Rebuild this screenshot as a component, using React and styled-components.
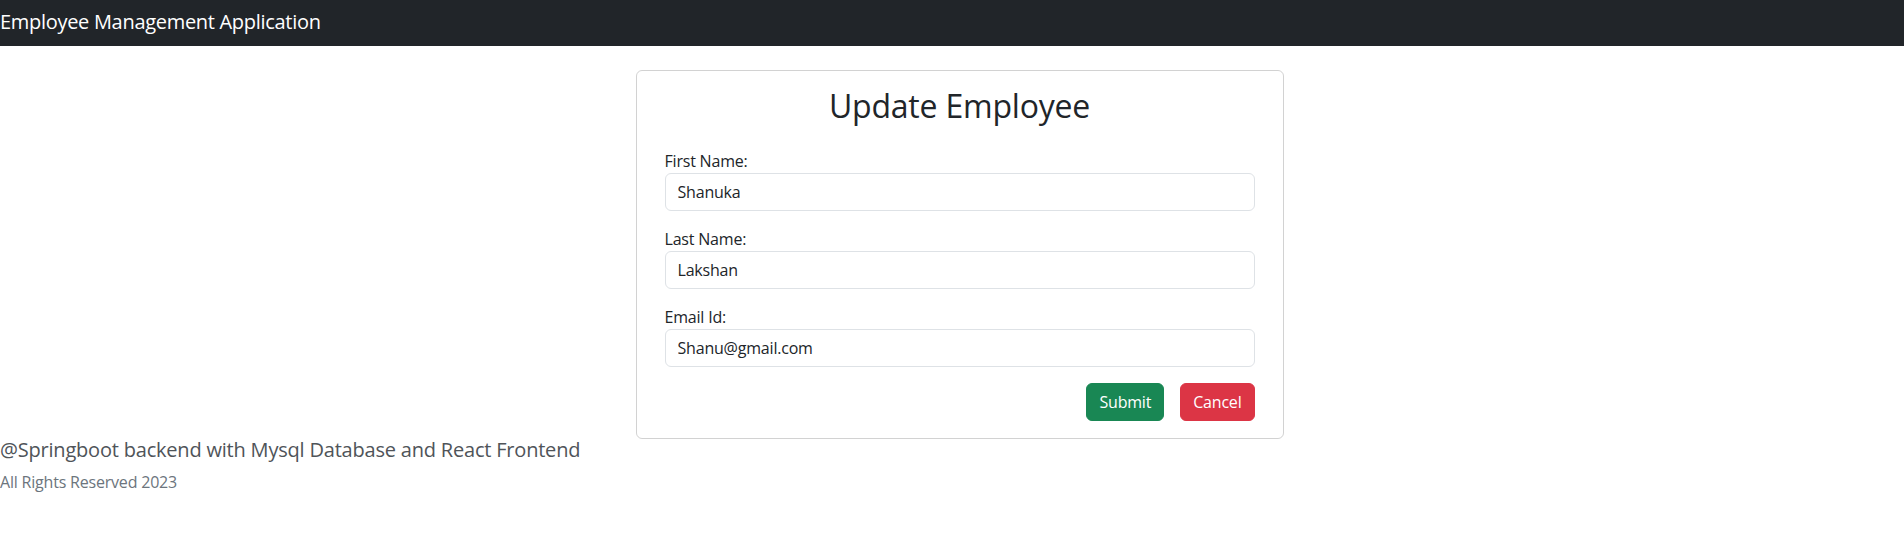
import React from 'react';
import styled, { createGlobalStyle } from 'styled-components';

const GlobalStyle = createGlobalStyle`
  body {
    margin: 0;
    font-family: "Open Sans", "Noto Sans", sans-serif;
    letter-spacing: -0.2px;
    color: #212529;
    background: #fff;
  }
`;

const Navbar = styled.nav`
  height: 46px;
  background: #212529;
  display: flex;
  align-items: center;
`;

const Brand = styled.span`
  font-size: 20px;
  color: #fff;
  line-height: 1.5;
  letter-spacing: -0.3px;
  padding-bottom: 2px;
`;

const Main = styled.main`
  display: flex;
  justify-content: center;
  padding: 24px 0 0 15px;
`;

const Card = styled.div`
  width: 648px;
  box-sizing: border-box;
  border: 1px solid rgba(0, 0, 0, 0.175);
  border-radius: 6px;
  padding: 16px 28px 17px;
`;

const Title = styled.h2`
  margin: 0 0 24px;
  font-size: 32px;
  font-weight: 400;
  line-height: 1.2;
  text-align: center;
`;

const Group = styled.div`
  margin-bottom: 16px;
`;

const Label = styled.label`
  display: block;
  font-size: 16px;
  line-height: 24px;
`;

const Input = styled.input`
  display: block;
  width: 100%;
  box-sizing: border-box;
  height: 38px;
  padding: 6px 12px;
  font-family: inherit;
  font-size: 16px;
  letter-spacing: inherit;
  color: #212529;
  border: 1px solid #dee2e6;
  border-radius: 6px;
  outline: none;
`;

const Actions = styled.div`
  display: flex;
  justify-content: flex-end;
  gap: 16px;
`;

const Button = styled.button`
  height: 38px;
  padding: 6px 12px;
  font-family: inherit;
  font-size: 16px;
  letter-spacing: inherit;
  color: #fff;
  border: 1px solid ${(p) => p.$bg};
  background: ${(p) => p.$bg};
  border-radius: 6px;
  cursor: pointer;
`;

const Footer = styled.footer`
  padding-top: 0;
`;

const FooterTitle = styled.p`
  margin: 0;
  font-size: 20px;
  line-height: 22px;
  color: #4f5459;
`;

const FooterNote = styled.p`
  margin: 9px 0 0;
  font-size: 16px;
  line-height: 24px;
  color: #6c757d;
`;

const fields = [
  { label: 'First Name:', value: 'Shanuka' },
  { label: 'Last Name:', value: 'Lakshan' },
  { label: 'Email Id:', value: 'Shanu@gmail.com' },
];

export default function App() {
  return (
    <>
      <GlobalStyle />
      <Navbar>
        <Brand>Employee Management Application</Brand>
      </Navbar>
      <Main>
        <Card>
          <Title>Update Employee</Title>
          <form onSubmit={(e) => e.preventDefault()}>
            {fields.map((f) => (
              <Group key={f.label}>
                <Label>{f.label}</Label>
                <Input defaultValue={f.value} />
              </Group>
            ))}
            <Actions>
              <Button type='submit' $bg='#198754'>Submit</Button>
              <Button type='button' $bg='#dc3545'>Cancel</Button>
            </Actions>
          </form>
        </Card>
      </Main>
      <Footer>
        <FooterTitle>@Springboot backend with Mysql Database and React Frontend</FooterTitle>
        <FooterNote>All Rights Reserved 2023</FooterNote>
      </Footer>
    </>
  );
}
